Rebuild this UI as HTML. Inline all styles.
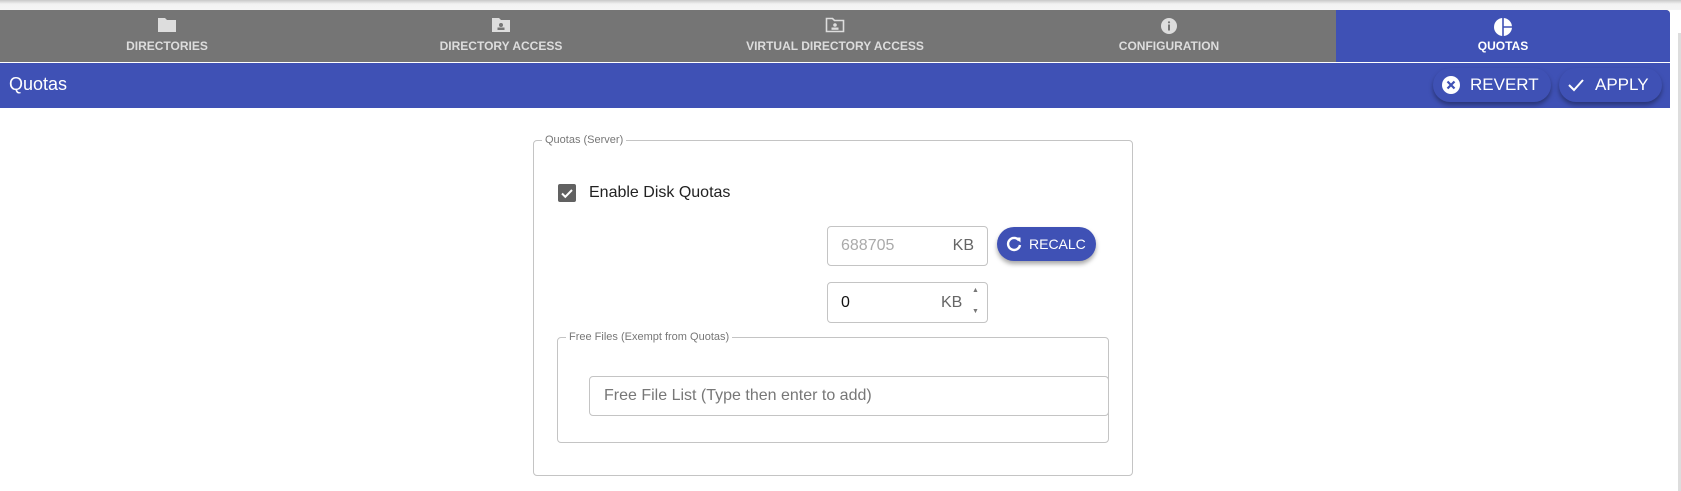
<!DOCTYPE html>
<html><head><meta charset="utf-8"><style>
*{box-sizing:border-box;margin:0;padding:0}
body{width:1681px;height:491px;overflow:hidden;background:#fff;font-family:"Liberation Sans",Arial,sans-serif;position:relative}
.topstrip{position:absolute;left:0;top:0;width:1681px;height:10px;background:linear-gradient(#c8c8c8,#f2f2f2 40%,#f5f5f5)}
.tabs{position:absolute;left:0;top:10px;width:1670px;height:52px;background:#757575;display:flex;border-top-right-radius:4px;overflow:hidden}
.tab{width:334px;height:52px;position:relative;color:#ddd;font-size:12px;font-weight:bold;text-align:center}
.tab .lbl{position:absolute;left:0;right:0;top:29px}
.tab svg{position:absolute;left:50%;top:7px;transform:translateX(-50%)}
.tab.act{background:#3f51b5;color:#fff}
.header{position:absolute;left:0;top:63px;width:1670px;height:45px;background:#3f51b5;color:#fff}
.header .t{position:absolute;left:9px;top:11px;font-size:18px}
.hb{position:absolute;top:5px;height:34px;border-radius:17px;background:#3f51b5;box-shadow:0 3px 5px rgba(0,0,0,.35);color:#fff;font-size:17px;line-height:34px}
.rs{position:absolute;left:1678px;top:33px;width:3px;height:458px;background:#ddd}
fieldset{position:absolute;border:1px solid #c4c4c4;border-radius:4px}
legend{font-size:11px;color:#777;padding:0 3px;margin-left:8px}
.inp{position:absolute;border:1px solid #c4c4c4;border-radius:4px;font-size:16px}
</style></head><body>
<div class="topstrip"></div>
<div class="rs"></div>
<div class="tabs">
 <div class="tab"><svg width="20" height="16" viewBox="0 0 20 16"><path d="M1 1h7l2 2h9v12H1z" fill="#ddd"/></svg><div class="lbl">DIRECTORIES</div></div>
 <div class="tab"><svg width="20" height="16" viewBox="0 0 20 16"><path d="M1 1h7l2 2h9v12H1z" fill="#ddd"/><circle cx="10" cy="8" r="2" fill="#757575"/><rect x="6.5" y="10.5" width="7" height="2.5" fill="#757575"/></svg><div class="lbl">DIRECTORY ACCESS</div></div>
 <div class="tab"><svg width="20" height="16" viewBox="0 0 20 16"><path d="M1.5 1.5h6l2 2h9v11h-17z" fill="none" stroke="#ddd" stroke-width="1.6"/><circle cx="10" cy="8" r="1.8" fill="#ddd"/><rect x="6.5" y="10.5" width="7" height="2.3" fill="#ddd"/></svg><div class="lbl">VIRTUAL DIRECTORY ACCESS</div></div>
 <div class="tab"><svg width="18" height="18" viewBox="0 0 18 18"><circle cx="9" cy="9" r="8" fill="#ddd"/><rect x="8" y="7.5" width="2" height="6" fill="#757575"/><circle cx="9" cy="5.3" r="1.1" fill="#757575"/></svg><div class="lbl">CONFIGURATION</div></div>
 <div class="tab act"><svg width="20" height="20" viewBox="0 0 20 20"><circle cx="10" cy="10" r="9" fill="#fff"/><path d="M10 1v18M10 10h9" stroke="#3f51b5" stroke-width="1.6"/></svg><div class="lbl">QUOTAS</div></div>
</div>
<div class="header"><div class="t">Quotas</div>
 <div class="hb" style="left:1433px;width:118px"><svg style="position:absolute;left:9px;top:8px" width="18" height="18" viewBox="0 0 18 18"><circle cx="9" cy="9" r="9" fill="#fff"/><path d="M5.5 5.5l7 7M12.5 5.5l-7 7" stroke="#3f51b5" stroke-width="2.2"/></svg><span style="position:absolute;left:37px">REVERT</span></div>
 <div class="hb" style="left:1559px;width:103px"><svg style="position:absolute;left:8px;top:9px" width="18" height="16" viewBox="0 0 18 16"><path d="M2 8l5 5L16 3" fill="none" stroke="#fff" stroke-width="2"/></svg><span style="position:absolute;left:36px">APPLY</span></div>
</div>
<fieldset style="left:533px;top:134px;width:600px;height:342px"><legend>Quotas (Server)</legend></fieldset>
<div style="position:absolute;left:558px;top:184px;width:18px;height:18px;background:#616161;border-radius:2px"><svg width="18" height="18" viewBox="0 0 18 18"><path d="M4 9.5l3.3 3.3L14 6" fill="none" stroke="#fff" stroke-width="2"/></svg></div>
<div style="position:absolute;left:589px;top:184px;font-size:16px;color:#222">Enable Disk Quotas</div>
<div class="inp" style="left:827px;top:226px;width:161px;height:40px"><span style="position:absolute;left:13px;top:10px;color:#aaa">688705</span><span style="position:absolute;right:13px;top:10px;color:#666">KB</span></div>
<div class="hb" style="left:997px;top:227px;width:99px;height:34px;font-size:14px"><svg style="position:absolute;left:8px;top:8px" width="18" height="18" viewBox="0 0 18 18"><path d="M14 5.5A6 6 0 1 0 15 10" fill="none" stroke="#fff" stroke-width="2.4"/><path d="M10.5 2.5h5v5z" fill="#fff"/></svg><span style="position:absolute;left:32px;font-weight:normal">RECALC</span></div>
<div class="inp" style="left:827px;top:282px;width:161px;height:41px"><span style="position:absolute;left:13px;top:11px;color:#111">0</span><span style="position:absolute;left:113px;top:11px;color:#666">KB</span><span style="position:absolute;left:144px;top:4px;font-size:7px;color:#777">▲</span><span style="position:absolute;left:144px;top:25px;font-size:7px;color:#777">▼</span></div>
<fieldset style="left:557px;top:331px;width:552px;height:112px"><legend>Free Files (Exempt from Quotas)</legend></fieldset>
<div class="inp" style="left:589px;top:376px;width:520px;height:40px"><span style="position:absolute;left:14px;top:10px;color:#777">Free File List (Type then enter to add)</span></div>
</body></html>
